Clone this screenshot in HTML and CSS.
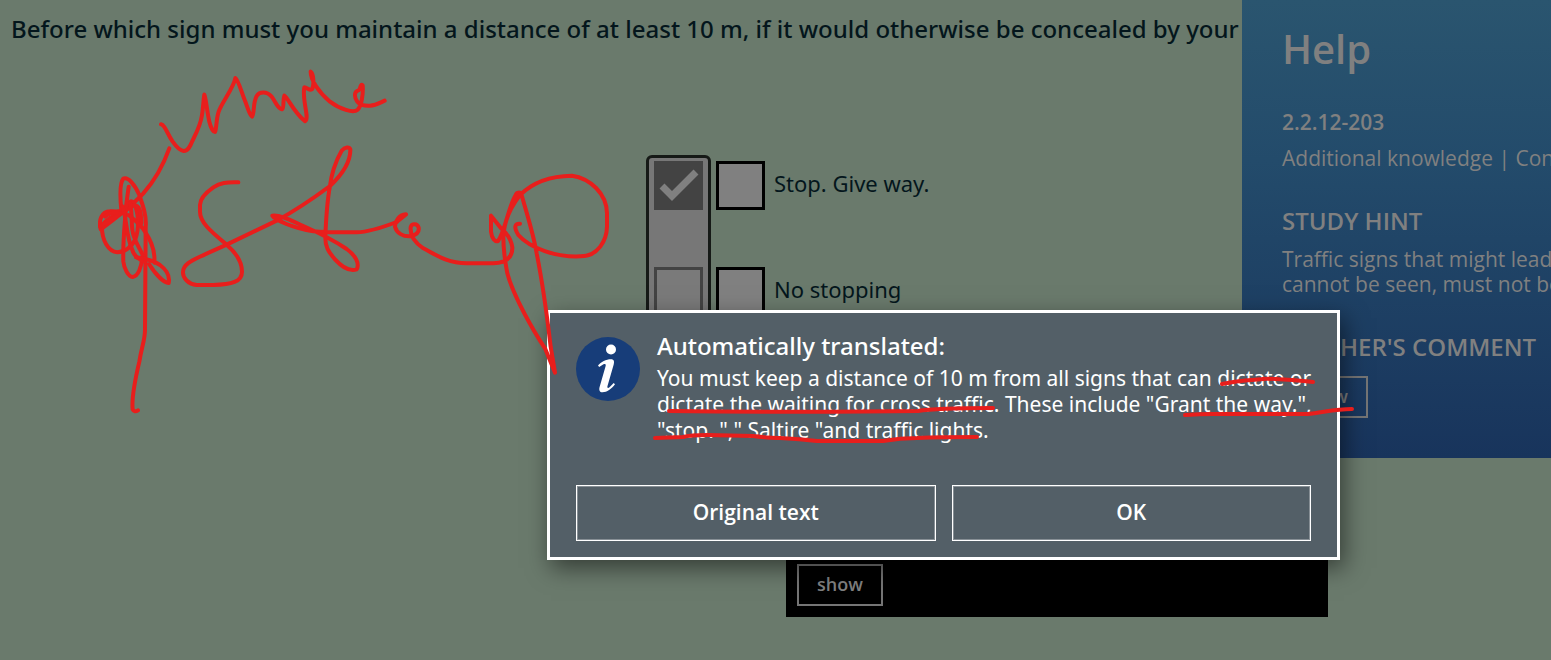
FILE: index.html
```html
<!DOCTYPE html>
<html lang="en">
<head>
<meta charset="utf-8">
<title>Theory question</title>
<link rel="stylesheet" href="styles.css">
</head>
<body>
<div class="page">
  <main class="main">
    <h1 class="question">Before which sign must you maintain a distance of at least 10 m, if it would otherwise be concealed by your</h1>
    <div class="answers">
      <div class="solution">
        <span class="tick"><input class="box box-solution" type="checkbox" aria-label="Solution for Stop. Give way." checked disabled><svg class="tick-mark" viewBox="0 0 49 49" aria-hidden="true"><path d="M8 25 L18 35 L42 11"/></svg></span>
        <input class="box box-solution" type="checkbox" aria-label="Solution for No stopping" disabled>
      </div>
      <div class="choices">
        <label class="choice"><input class="box" type="checkbox"><span>Stop. Give way.</span></label>
        <label class="choice"><input class="box" type="checkbox"><span>No stopping</span></label>
      </div>
    </div>
    <div class="bar"><button class="outline-button" type="button">show</button></div>
  </main>

  <aside class="help">
    <h2 class="help-title">Help</h2>
    <p class="help-number">2.2.12-203</p>
    <p class="help-text">Additional knowledge | Con</p>
    <h3 class="help-heading hint-heading">STUDY HINT</h3>
    <p class="help-text hint-text">Traffic signs that might lead<br>cannot be seen, must not be</p>
    <h3 class="help-heading comment-heading">TEACHER'S COMMENT</h3>
    <button class="outline-button" type="button">show</button>
  </aside>

  <section class="dialog" role="dialog" aria-labelledby="dialog-title">
    <div class="message">
      <svg class="info" viewBox="0 0 64 64" aria-hidden="true">
        <circle class="info-disc" cx="32" cy="32" r="32"/>
        <circle class="info-mark" cx="35" cy="12.500" r="5"/>
        <path class="info-mark" d="M22 28.500 C25 25 30 22.300 35 22.300 C38 22.300 38.500 24.500 37.700 27.500 L31.500 49 C31 51 32 51.500 33.500 50.300 L37.700 46 L39 47.300 C35.500 52 31 55.300 26.500 55.300 C23.500 55.300 22.800 53 23.600 50 L29.500 29.500 C30.200 27 29.500 26.400 27.500 27.300 L23.200 30 Z"/>
      </svg>
      <div>
        <h2 class="dialog-title" id="dialog-title">Automatically translated:</h2>
        <p class="dialog-text">You must keep a distance of 10 m from all signs that can dictate or<br>dictate the waiting for cross traffic. These include "Grant the way.",<br>"stop. "," Saltire "and traffic lights.</p>
      </div>
    </div>
    <div class="actions">
      <button class="action" type="button">Original text</button>
      <button class="action" type="button">OK</button>
    </div>
  </section>

  <svg class="ink" width="1551" height="660" viewBox="0 0 1551 660" aria-hidden="true">
    <g transform="translate(80 60) scale(.33333)" stroke-width="12">
      <path d="M243 193 C255 195 260 218 278 245 C290 262 302 272 311 273 C325 273 331 258 337 243 C350 217 362 195 366 165 C370 140 371 110 373 104 C378 115 382 160 388 185 C393 205 400 216 405 216 C410 205 408 180 416 155 C424 130 462 82 466 54 C475 58 485 100 498 130 C505 150 510 168 516 170 C524 160 518 130 530 108 C538 95 560 93 575 110 C590 130 592 145 606 148 C613 145 608 120 613 107 C625 115 640 155 675 184 C690 175 665 120 673 82 C682 82 690 95 697 87 C703 70 700 40 692 35 C692 60 715 95 750 125 C780 148 820 160 832 150 C845 140 850 100 848 76 C840 70 842 90 835 91 C820 95 824 115 832 125 C840 135 850 138 870 137 C885 136 900 128 914 122"/>
      <path d="M268 265 C250 315 230 355 190 400 C160 432 100 480 62 508 C55 480 65 455 90 454 C105 452 120 458 135 452 C142 435 148 420 157 425 C178 450 178 510 165 540 C155 560 135 577 112 577 C85 575 65 540 66 500 C70 485 95 470 130 450"/>
      <path d="M75 470 C95 450 125 462 160 436 C180 435 183 455 184 490 M60 500 L150 443"/>
      <path d="M124 450 C121 420 118 370 130 356 C145 350 165 375 178 405 C190 440 200 470 197 500 L195 810 C195 840 185 860 178 905 C165 960 155 1020 158 1048 Q163 1058 174 1051"/>
      <path d="M146 380 L138 440 C135 490 128 540 130 605 C132 625 145 650 158 651 C175 648 185 620 187 590"/>
      <path d="M128 440 C140 480 140 530 155 565 C162 590 175 596 195 606 M150 430 C160 470 150 500 162 530 C172 560 190 580 193 600"/>
      <path d="M145 465 C170 485 180 490 195 515 C212 540 226 570 223 608 M168 592 C190 595 220 602 240 615 C260 630 270 650 266 669 C250 668 225 640 207 612"/>
      <path d="M475 367 C440 366 420 368 400 382 C380 396 360 415 360 435 V455 C360 490 400 520 440 554 C470 580 486 605 486 635 C486 665 455 674 400 675 H350 C325 672 308 655 309 636 C310 610 340 600 375 583 L440 554 L590 482 C640 455 700 415 750 378 C785 345 812 310 811 268 C808 260 795 260 785 272 C765 305 753 350 750 378 C742 420 738 480 736 530 C735 560 745 575 765 598 C785 620 810 635 830 628 C840 610 825 585 800 567 C775 550 720 520 670 498 C630 480 600 464 577 467 C585 480 640 505 700 514 C740 518 780 517 830 517 C860 516 900 505 950 486"/>
    </g>
    <g transform="translate(380 160) scale(.33333)" stroke-width="12">
      <path d="M50 186 L78 163 C55 165 45 185 45 200 C50 220 70 230 90 229 C110 225 118 215 116 203 C112 190 95 190 92 202 C90 225 100 245 130 265 C160 280 200 310 260 310 H340 C380 308 398 290 397 262 C393 235 375 215 363 205 L333 167 V215 C335 235 345 246 354 243 C375 215 385 140 407 105 C410 96 420 96 424 102 C440 160 460 220 470 280 C490 380 505 500 512 560 L525 638 L495 565 C465 520 400 410 382 340 C375 300 370 280 370 230 C372 190 385 150 420 105 C450 75 500 48 576 47 C630 55 680 100 681 160 V200 C680 240 655 290 600 289 C530 292 450 265 415 225 C400 200 405 190 420 191"/>
    </g>
    <g stroke-width="4">
      <path d="M1222 384 C1240 380 1255 380 1263 379 S1290 380 1313 382"/>
      <path d="M669 411 C760 412 850 412 918 411 C935 408 960 408 993 408"/>
      <path d="M1185 415 C1200 414 1205 414 1213 414 L1307 414 C1325 412 1335 409 1352 409"/>
      <path d="M655 438 L683 437 Q690 435 707 435 L753 436 Q770 438 780 438 Q800 439 817 441 L883 441 Q900 438 917 438 Q940 437 977 437"/>
    </g>
  </svg>
</div>
</body>
</html>
```

FILE: styles.css
```css
* { box-sizing: border-box; }

body {
  margin: 0;
  background: #6a7a6c;
  color: #04161c;
  font-family: "Noto Sans", "Open Sans", sans-serif;
}

h1, h2, h3, p { margin: 0; }

button { cursor: pointer; }

.page {
  position: relative;
  min-height: 100vh;
  overflow: hidden;
}

.main {
  display: flex;
  flex-direction: column;
}

.question {
  padding: 11px 11px 0;
  font-size: 24px;
  font-weight: 500;
  line-height: 36px;
  white-space: nowrap;
}

.answers {
  display: flex;
  gap: 5px;
  margin: 108px 0 0 646px;
}

.solution {
  display: flex;
  flex-direction: column;
  gap: 57px;
  height: 390px;
  padding: 3px 5px;
  border: 3px solid #161a17;
  border-radius: 6px;
  background: #777777;
}

.tick {
  display: grid;
}

.tick > * { grid-area: 1 / 1; }

.tick-mark {
  width: 49px;
  height: 49px;
  fill: none;
  stroke: #808080;
  stroke-width: 7;
}

.box {
  appearance: none;
  flex: none;
  width: 49px;
  height: 49px;
  margin: 0;
  border: 3px solid #000000;
  background: #808080;
}

.box-solution {
  border-color: #434343;
  background: #7a7a7a;
}

.box-solution:checked { background: #434343; }

.choices {
  display: flex;
  flex-direction: column;
  gap: 57px;
  padding-top: 6px;
}

.choice {
  display: flex;
  align-items: center;
  gap: 9px;
  font-size: 22px;
  line-height: 30px;
}

.choice span { padding-bottom: 5px; }

.bar {
  width: 542px;
  margin-left: 786px;
  padding: 19px 11px 11px;
  background: #000000;
}

.outline-button {
  height: 42px;
  padding: 0 18px 2px;
  border: 2px solid #757575;
  background: transparent;
  color: #808080;
  font: 600 18px/24px "Open Sans", sans-serif;
}

.help {
  position: absolute;
  top: 0;
  right: 0;
  width: 309px;
  padding: 22px 0 40px 40px;
  overflow: hidden;
  background: linear-gradient(#2a556f, #234b6b 35%, #18345c);
  color: #808080;
  font-family: "Open Sans", sans-serif;
  white-space: nowrap;
}

.help-title {
  font-size: 40px;
  font-weight: 600;
  line-height: 54px;
}

.help-number {
  margin-top: 32px;
  font-size: 21px;
  font-weight: 600;
  line-height: 28px;
}

.help-text {
  margin-top: 10px;
  font-size: 21px;
  line-height: 25px;
}

.help-heading {
  font-size: 24px;
  font-weight: 600;
  line-height: 30px;
}

.hint-heading { margin-top: 35px; }

.hint-text { margin-top: 11px; }

.comment-heading { margin: 35px 0 14px; }

.dialog {
  position: absolute;
  top: 310px;
  left: 547px;
  width: 793px;
  padding: 17px 26px 16px;
  border: 3px solid #ffffff;
  background: #535f67;
  box-shadow: 4px 8px 22px rgba(0, 0, 0, 0.5);
  color: #ffffff;
}

.message {
  display: flex;
  gap: 17px;
  min-height: 155px;
}

.info {
  flex: none;
  width: 64px;
  height: 64px;
  margin-top: 7px;
}

.info-disc { fill: #173d79; }

.info-mark { fill: #ffffff; }

.dialog-title {
  font-size: 24px;
  font-weight: 500;
  line-height: 32px;
}

.dialog-text {
  margin-top: 3px;
  font-size: 21px;
  line-height: 26px;
  white-space: nowrap;
}

.actions {
  display: flex;
  gap: 16px;
}

.action {
  flex: 1;
  height: 56px;
  padding: 0 0 2px;
  border: 1px solid #ffffff;
  box-shadow: inset 0 0 0 1px rgba(255, 255, 255, 0.3);
  background: transparent;
  color: #ffffff;
  font: 600 21px/28px "Open Sans", sans-serif;
}

.ink {
  position: absolute;
  top: 0;
  left: 0;
  pointer-events: none;
  fill: none;
  stroke: #e81e1c;
  stroke-linecap: round;
  stroke-linejoin: round;
}
```
